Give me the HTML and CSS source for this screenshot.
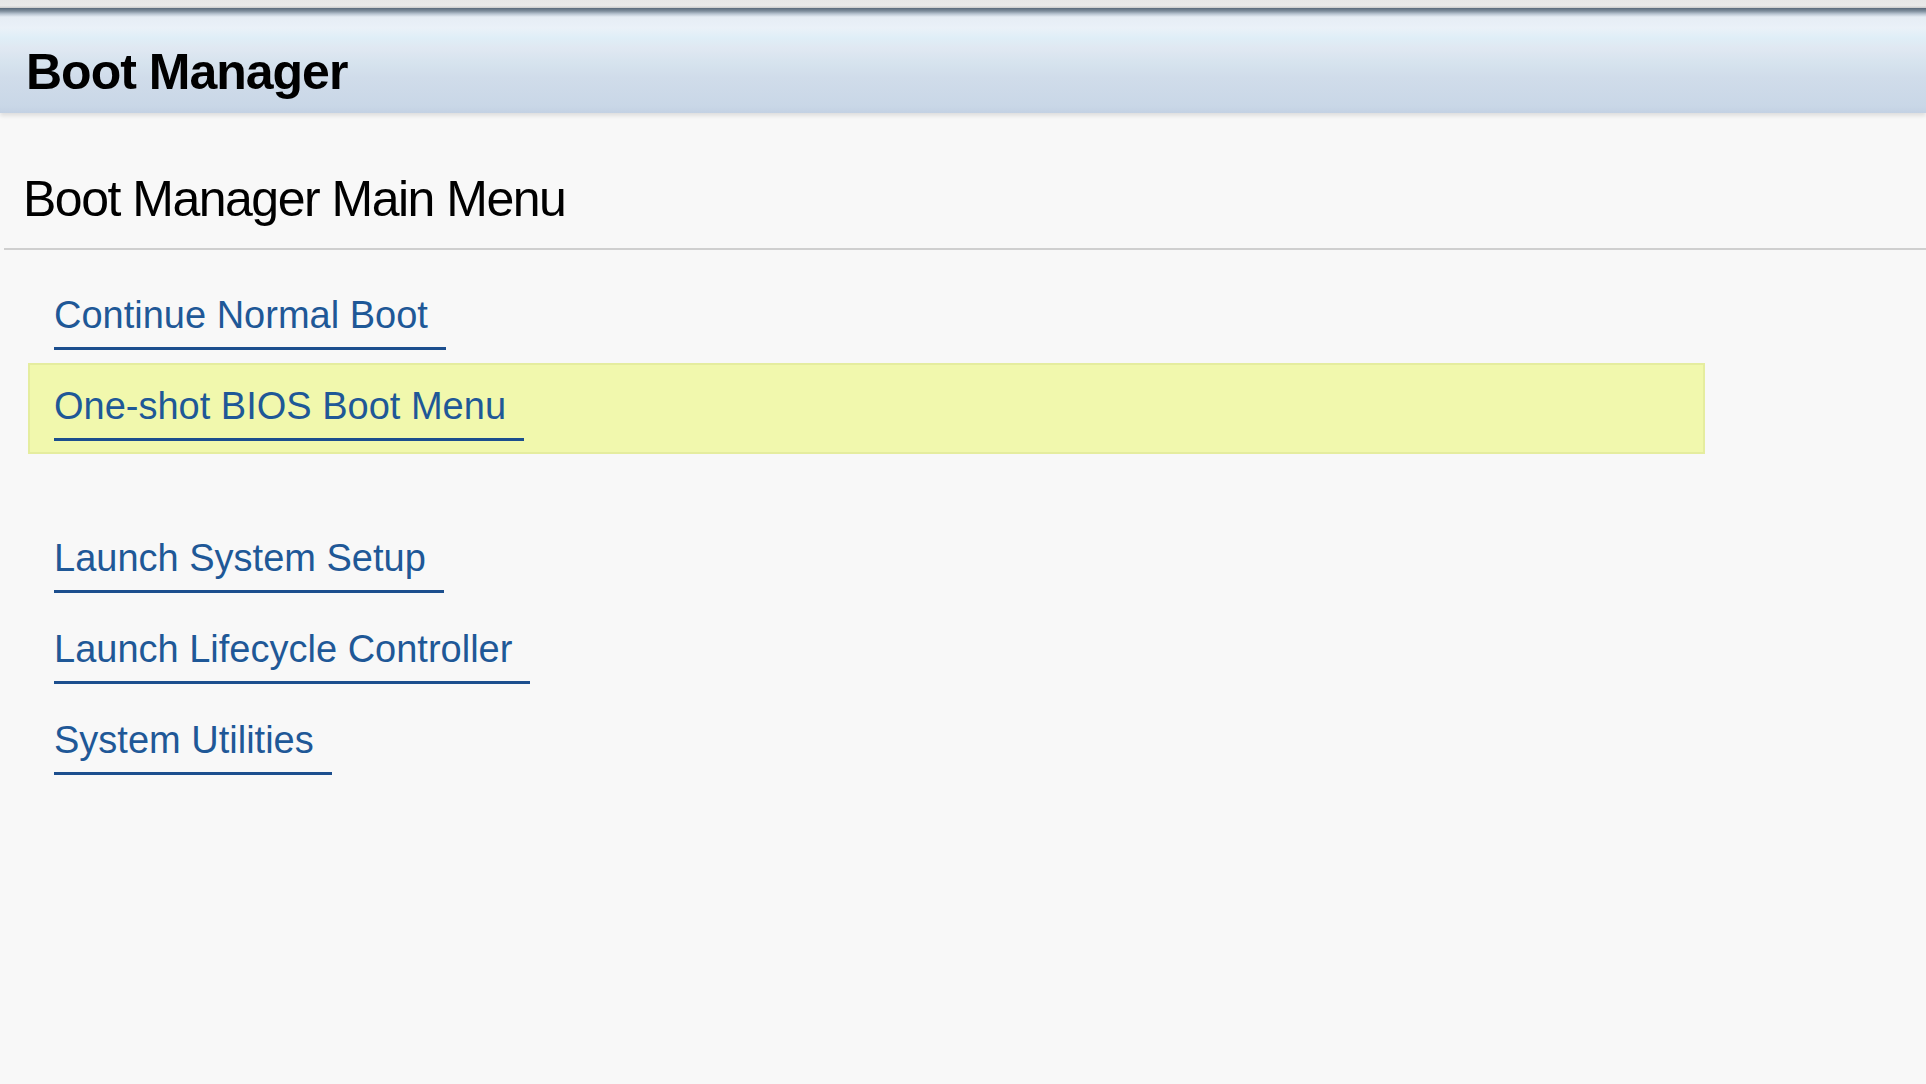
FILE: index.html
```html
<!DOCTYPE html>
<html lang="en">
<head>
<meta charset="utf-8">
<title>Boot Manager</title>
<link rel="stylesheet" href="styles.css">
</head>
<body>
<div class="topstrip"></div>
<header class="titlebar">
  <h1 class="title">Boot Manager</h1>
</header>
<main class="content">
  <div class="section-head">
    <h2 class="heading">Boot Manager Main Menu</h2>
  </div>
  <ul class="menu">
    <li class="row first"><a class="link">Continue Normal Boot</a></li>
    <li class="row selected"><a class="link">One-shot BIOS Boot Menu</a></li>
    <li class="spacer"></li>
    <li class="row"><a class="link">Launch System Setup</a></li>
    <li class="row"><a class="link">Launch Lifecycle Controller</a></li>
    <li class="row"><a class="link">System Utilities</a></li>
  </ul>
</main>
</body>
</html>
```

FILE: styles.css
```css
* { box-sizing: border-box; }

html, body {
  margin: 0;
  padding: 0;
  height: 100%;
}

body {
  background: #f8f8f8;
  font-family: "Liberation Sans", Arial, sans-serif;
  overflow: hidden;
}

.topstrip {
  height: 8px;
  background: linear-gradient(to bottom, #e6e6e6 0px, #e9e9e9 6px, #d4d4d4 7px, #cfcfcf 8px);
}

.titlebar {
  height: 105px;
  padding: 34px 0 0 26px;
  background: linear-gradient(to bottom,
    #59697a 0px,
    #7d8c9b 3px,
    #b9c5d2 6px,
    #e6edf5 9px,
    #eaf1f8 20px,
    #dfeef7 30px,
    #e0e8f2 40px,
    #d6e3ee 55px,
    #d0dcea 70px,
    #c9d7e7 98px,
    #c3d1e3 105px);
  box-shadow: 0 3px 4px rgba(0, 0, 0, 0.10);
  position: relative;
}

.title {
  margin: 0;
  font-size: 50px;
  line-height: 60px;
  font-weight: bold;
  letter-spacing: -1px;
  color: #000;
}

.content {
  padding-top: 56px;
}

.section-head {
  margin-left: 4px;
  padding: 0 0 19px 19px;
  border-bottom: 2px solid #cfcfcf;
}

.heading {
  margin: 0;
  font-size: 50px;
  line-height: 60px;
  font-weight: normal;
  letter-spacing: -1.5px;
  color: #000;
}

.menu {
  list-style: none;
  margin: 22px 0 0 28px;
  padding: 0;
  width: 1677px;
  display: flex;
  flex-direction: column;
}

.row {
  height: 91px;
  padding: 24px 0 0 26px;
  border: 2px solid transparent;
}

.row.first {
  padding-top: 21px;
}

.row.selected {
  padding-top: 21px;
  background: #f1f8ad;
  border-color: #e5ed9f;
}

.spacer {
  height: 58px;
}

.link {
  display: inline-block;
  font-size: 38px;
  line-height: 44px;
  padding: 0 18px 10px 0;
  border-bottom: 3px solid #1c4f8e;
  color: #1f5897;
  text-decoration: none;
  margin-top: -2px;
  margin-left: -2px;
}
```
